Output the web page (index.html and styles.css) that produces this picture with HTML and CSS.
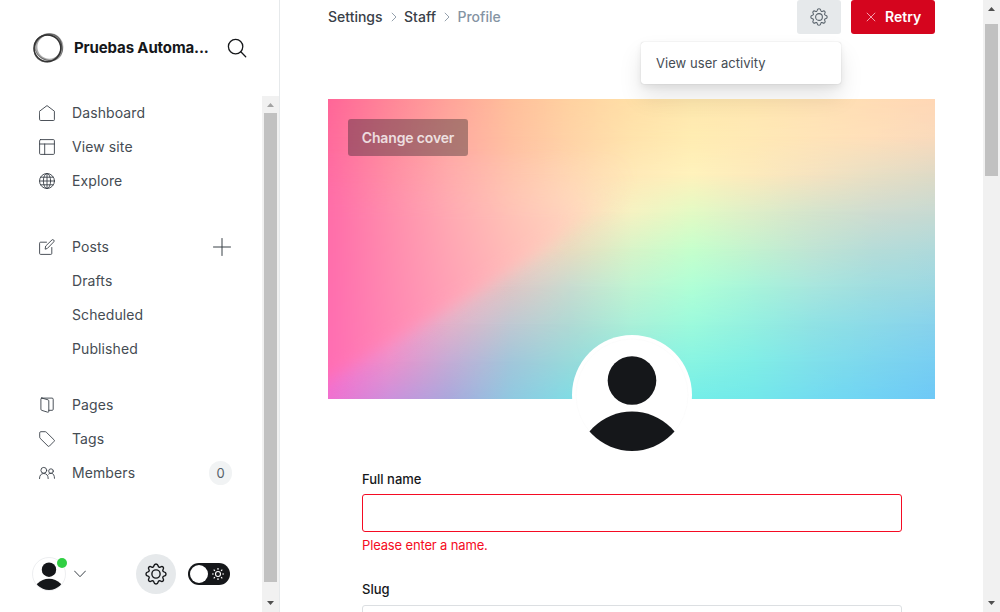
FILE: index.html
```
<!DOCTYPE html>
<html lang="en">
<head>
<meta charset="utf-8">
<title>Profile</title>
<link rel="stylesheet" href="styles.css">
</head>
<body>
<svg class="defs" width="0" height="0">
  <symbol id="gear" viewBox="0 0 24 24">
    <circle cx="12" cy="12" r="4.5"/>
    <path d="M9.6 3.3 C10.2 .3 13.8 .3 14.4 3.3 C14.7 4.6 15.6 5 16.8 4.4 C19.2 2.9 21.2 4.9 19.7 7.3 C19 8.4 19.5 9.3 20.7 9.6 C23.7 10.2 23.7 13.8 20.7 14.4 C19.5 14.7 19 15.6 19.7 16.7 C21.2 19.1 19.2 21.1 16.8 19.6 C15.6 19 14.7 19.4 14.4 20.7 C13.8 23.7 10.2 23.7 9.6 20.7 C9.3 19.4 8.4 19 7.2 19.6 C4.8 21.1 2.8 19.1 4.3 16.7 C5 15.6 4.5 14.7 3.3 14.4 C.3 13.8 .3 10.2 3.3 9.6 C4.5 9.3 5 8.4 4.3 7.3 C2.8 4.9 4.8 2.9 7.2 4.4 C8.4 5 9.3 4.6 9.6 3.3 Z"/>
  </symbol>
</svg>
<div class="app">
  <aside class="sidebar">
    <header class="brand">
      <svg class="brand-logo" viewBox="0 0 32 32"><g fill="none" stroke="#333"><circle cx="15.400" cy="16.300" r="13.400" stroke-width="1.500"/><ellipse cx="17.300" cy="15" rx="13" ry="12.800" stroke-width="2.200" opacity=".4"/><ellipse cx="16" cy="15.800" rx="14.700" ry="12.600" stroke-width="1.200" opacity=".6" transform="rotate(-48 16 16)"/><ellipse cx="16.400" cy="15.500" rx="14.300" ry="12.400" stroke-width="1" opacity=".55" transform="rotate(30 16 16)"/></g></svg>
      <span class="brand-name">Pruebas Automa...</span>
      <svg class="icon search" viewBox="0 0 20 20"><circle cx="8.600" cy="8.600" r="7.200"/><path d="M13.800 13.800 18.700 18.700"/></svg>
    </header>
    <div class="sidebar-body">
      <div class="sidebar-content">
        <nav class="nav">
          <a class="nav-item"><svg class="icon nav-icon" viewBox="0 0 16 16"><path d="M.6 6.2 8 .6l7.4 5.6v8.4q0 .9-.9.9h-13q-.9 0-.9-.9z"/></svg>Dashboard</a>
          <a class="nav-item"><svg class="icon nav-icon" viewBox="0 0 16 16"><rect x=".6" y=".6" width="14.8" height="14.8" rx="1"/><path d="M.6 5h14.8M5.700 5v10.400"/></svg>View site</a>
          <a class="nav-item"><svg class="icon nav-icon" viewBox="0 0 16 16"><circle cx="8" cy="8" r="7.5"/><ellipse cx="8" cy="8" rx="3.6" ry="7.5"/><path d="M.5 8h15M8 .5v15M1.8 4.2h12.4M1.8 11.8h12.4"/></svg>Explore</a>
          <a class="nav-item section"><svg class="icon nav-icon" viewBox="0 0 16 16"><path d="M7.5 3.2H1.6q-1 0-1 1v10.2q0 1 1 1h10.2q1 0 1-1V8.5M6.2 9.8l.5-2.800L13 .9q.8-.7 1.700.1.9.9.1 1.800L8.600 9.200z"/></svg>Posts<svg class="icon plus" viewBox="0 0 18 18"><path d="M9 .5v17M.5 9h17"/></svg></a>
          <a class="nav-item sub">Drafts</a>
          <a class="nav-item sub">Scheduled</a>
          <a class="nav-item sub">Published</a>
          <a class="nav-item section pages"><svg class="icon nav-icon" viewBox="0 0 16 16"><path d="M2.8 1.1 9 2.8q.8.3.8 1v10.5q0 1.200-1.100.9l-5.800-1.800q-1-.3-1-1.100V2q0-1 .9-1Zm0 0h10.200q1.200 0 1.200 1.100v10.100q0 1-1 1H9.800"/></svg>Pages</a>
          <a class="nav-item"><svg class="icon nav-icon" viewBox="0 0 16 16"><path d="M.7 1.700q0-1 1-1h4.500q.6 0 1 .4l7.900 7.800q.7.7 0 1.400l-4.700 4.800q-.7.7-1.400 0L1.100 7.300q-.4-.4-.4-1Z"/></svg>Tags</a>
          <a class="nav-item"><svg class="icon nav-icon" viewBox="0 0 16 16"><circle cx="4.800" cy="5.300" r="2.900"/><circle cx="12" cy="6.100" r="2.300"/><path d="M.5 13.600q0-5 4.300-5.100 4.400.1 4.400 5.100M9.600 9.100q1-1 2.800-.8 3 .3 3.100 5"/></svg>Members<span class="count">0</span></a>
        </nav>
        <footer class="userbar">
          <div class="user-avatar">
            <svg viewBox="0 0 34 34"><defs><clipPath id="smallClip"><circle cx="17" cy="17" r="16"/></clipPath></defs><circle cx="17" cy="17" r="16.5" fill="#fff" stroke="#e5e7ea" stroke-width=".7"/><g fill="#15171a" clip-path="url(#smallClip)"><circle cx="17" cy="12.700" r="7.200"/><circle cx="17" cy="38" r="16.300"/></g></svg>
            <span class="status"></span>
          </div>
          <svg class="icon chevron" viewBox="0 0 12 8"><path d="M.5 1 6 6.700 11.500 1"/></svg>
          <span class="settings-button"><svg class="icon gear-large"><use href="#gear"/></svg></span>
          <span class="night-toggle"><i></i><svg viewBox="0 0 12 12"><g fill="none" stroke="#fff"><circle cx="6" cy="6" r="2.500" stroke-width="1.100"/><path stroke-width="1.200" d="M6 0v1.700M6 10.300V12M0 6h1.700M10.300 6H12M1.700 1.700l1.200 1.200M9.100 9.100l1.200 1.200M10.300 1.700 9.100 2.900M2.900 9.100l-1.200 1.200"/></g></svg></span>
        </footer>
      </div>
      <div class="scrollbar side-scroll">
        <svg class="arrow light" viewBox="0 0 7 4"><path d="M0 4 3.500 0 7 4Z"/></svg>
        <span class="thumb"></span>
        <svg class="arrow" viewBox="0 0 7 4"><path d="M0 0h7L3.500 4Z"/></svg>
      </div>
    </div>
  </aside>
  <main class="main">
    <header class="topbar">
      <div class="breadcrumb">Settings<svg viewBox="0 0 6 10"><path d="M.8.8 5 5 .8 9.200"/></svg>Staff<svg viewBox="0 0 6 10"><path d="M.8.8 5 5 .8 9.200"/></svg><span>Profile</span></div>
      <div class="actions">
        <div class="action-gear"><svg class="icon gear-small"><use href="#gear"/></svg><div class="dropdown">View user activity</div></div>
        <div class="retry"><svg viewBox="0 0 10 10"><path d="M.8.8l8.400 8.400M9.200.8.800 9.200"/></svg>Retry</div>
      </div>
    </header>
    <section class="cover">
      <div class="art">
        <div class="wash w0"></div><div class="wash w1"></div><div class="wash w2"></div><div class="wash w3"></div><div class="wash w4"></div><div class="wash w5"></div><div class="wash w6"></div><div class="wash w7"></div><div class="wash w8"></div>
        <div class="beam"><div class="beam-shape"></div></div>
      </div>
      <span class="change-cover">Change cover</span>
      <div class="profile-photo"><svg viewBox="0 0 120 120"><defs><clipPath id="photoClip"><circle cx="60" cy="60" r="56"/></clipPath></defs><circle cx="60" cy="60" r="60" fill="#fff"/><circle cx="60" cy="60" r="56" fill="none" stroke="#fafafa" stroke-width=".6"/><g fill="#15171a" clip-path="url(#photoClip)"><circle cx="60" cy="45.500" r="24.300"/><circle cx="60" cy="131.500" r="55"/></g></svg></div>
    </section>
    <form class="profile-form">
      <label>Full name</label>
      <div class="field invalid"></div>
      <p class="error">Please enter a name.</p>
      <label class="slug-label">Slug</label>
      <div class="field"></div>
    </form>
  </main>
  <div class="scrollbar page-scroll">
    <svg class="arrow" viewBox="0 0 7 4"><path d="M0 4 3.500 0 7 4Z"/></svg>
    <span class="thumb"></span>
    <svg class="arrow" viewBox="0 0 7 4"><path d="M0 0h7L3.500 4Z"/></svg>
  </div>
</div>
</body>
</html>
```
FILE: styles.css
```
* { box-sizing: border-box; }
body { margin: 0; overflow: hidden; font-family: Inter, "Liberation Sans", sans-serif; color: #15171a; background: #fff; }
.defs { position: absolute; }
svg { display: block; flex: none; }
.app { display: flex; height: 612px; overflow: hidden; }
.icon { fill: none; stroke: #394047; stroke-width: 1; stroke-linejoin: round; stroke-linecap: round; }

.sidebar { width: 280px; flex: none; display: flex; flex-direction: column; border-right: 1px solid #e6e9eb; }
.brand { height: 96px; flex: none; display: flex; align-items: center; padding-left: 32px; }
.brand-logo { width: 32px; height: 32px; }
.brand-name { width: 154px; padding: 0 0 2px 10px; font-size: 15px; font-weight: 700; letter-spacing: -.13px; white-space: nowrap; }
.search { width: 20px; height: 20px; margin-left: 9px; stroke: #15171a; stroke-width: 1.3; }
.sidebar-body { flex: 1; display: flex; min-height: 0; }
.sidebar-content { flex: 1; display: flex; flex-direction: column; justify-content: space-between; }
.nav-item { display: flex; align-items: center; height: 34px; padding: 0 31px 2px 39px; font-size: 14px; letter-spacing: .1px; color: #454c53; }
.nav-icon { width: 16px; height: 16px; margin: 2px 17px 0 0; stroke-width: .9; }
.nav-item.section { margin-top: 32px; }
.nav-item.pages { margin-top: 22px; }
.nav-item.sub { padding-left: 72px; }
.plus { width: 18px; height: 18px; margin: 2px 0 0 auto; }
.count { width: 23px; height: 24px; border-radius: 12px; margin: 2px -1px 0 auto; background: #f1f3f4; text-align: center; font-size: 13px; line-height: 24px; color: #566069; letter-spacing: 0; }
.userbar { display: flex; align-items: center; padding: 0 0 18px 32px; }
.user-avatar { position: relative; width: 34px; height: 34px; }
.status { position: absolute; right: -1px; top: 1px; width: 10px; height: 10px; border-radius: 50%; background: #30cf43; }
.chevron { width: 12px; height: 8px; margin-left: 8px; }
.settings-button { width: 40px; height: 40px; margin-left: 50px; border-radius: 50%; background: #e6e9eb; display: grid; place-items: center; }
.gear-large { width: 22px; height: 22px; stroke: #15171a; stroke-width: 1.5; }
.night-toggle { width: 42px; height: 22px; margin-left: 12px; padding: 2px 6px 2px 2px; border-radius: 11px; background: #15171a; display: flex; align-items: center; justify-content: space-between; }
.night-toggle i { width: 18px; height: 18px; border-radius: 50%; background: #fff; }
.night-toggle svg { width: 12px; height: 12px; }

.scrollbar { width: 17px; flex: none; display: flex; flex-direction: column; align-items: center; background: #f1f1f1; }
.thumb { width: 13px; background: #c1c1c1; }
.arrow { width: 7px; height: 4px; fill: #505050; }
.arrow.light { fill: #a3a3a3; }
.side-scroll { padding-top: 7px; }
.side-scroll .thumb { height: 469px; margin: 6px 0 19px; }
.page-scroll { padding-top: 7px; }
.page-scroll .thumb { height: 152px; margin: 13px 0 425px; }

.main { flex: 1; padding: 0 48px; }
.topbar { height: 99px; display: flex; justify-content: space-between; }
.breadcrumb { height: 34px; padding-bottom: 2px; display: flex; align-items: center; font-size: 14px; font-weight: 500; color: #394047; }
.breadcrumb svg { width: 6px; height: 10px; margin: 2px 7.5px 0 8px; fill: none; stroke: #95a1ad; }
.breadcrumb span { color: #8594a3; }
.actions { display: flex; height: 34px; gap: 10px; }
.action-gear { position: relative; width: 44px; border-radius: 3px; background: #e6e9eb; display: grid; place-items: center; }
.gear-small { width: 18px; height: 18px; stroke: #566069; stroke-width: 1.4; }
.dropdown { position: absolute; z-index: 3; right: 0; top: 42px; width: 200px; height: 42px; padding-left: 15px; background: #fff; border-radius: 3px; font-size: 13px; line-height: 42px; color: #454c53; letter-spacing: .05px; box-shadow: 0 0 1px rgba(0,0,0,.25), 0 3px 7px rgba(0,0,0,.07), 0 13px 23px rgba(0,0,0,.1); }
.retry { width: 84px; border-radius: 3px; background: #d5051e; color: #fff; display: flex; align-items: center; padding: 0 0 2px 15px; font-size: 14px; font-weight: 600; }
.retry svg { width: 10px; height: 10px; margin: 2px 9px 0 0; stroke: #f59cac; fill: none; }

/* Each wash is a horizontal blend that fades in over the one before it, forming a colour mesh. */
.cover { position: relative; height: 300px; }
.art { height: 300px; display: grid; overflow: hidden; }
.wash, .beam { grid-area: 1 / 1; }
.w0 { background: linear-gradient(90deg,#ff6698,#ff8698,#ffa49a,#ffbf9b,#ffd2a1,#ffdfa7,#fee7ae,#ffe6b0,#ffe2b4,#ffdcb5,#ffd7b6); }
.w1 { background: linear-gradient(90deg,#ff6a9c,#ff8a9c,#ffa8a0,#ffc0a0,#ffd3a6,#ffe3ac,#ffecb2,#ffe9b5,#ffe4b8,#ffdfba,#fadabc); mask-image: linear-gradient(transparent 0,#000 12.5%); }
.w2 { background: linear-gradient(90deg,#ff6ca2,#ff8da2,#ffabaa,#ffc2aa,#ffd6b0,#ffe9b8,#fff2bc,#fdeabc,#f6e3c0,#e9dfc4,#dfdac6); mask-image: linear-gradient(transparent 12.5%,#000 25%); }
.w3 { background: linear-gradient(90deg,#ff6eaa,#ff90ac,#ffadb2,#ffc6b4,#ffdabc,#f6f2c2,#e4fac4,#dfeec8,#d5e4cc,#cfdcd0,#c8dad2); mask-image: linear-gradient(transparent 25%,#000 37.5%); }
.w4 { background: linear-gradient(90deg,#ff70b4,#ff92b8,#ffb0bc,#ffcac2,#e9dcc0,#d8f4c8,#c6ffcc,#c4f2cf,#c0e4d4,#b6dcd8,#b0dadb); mask-image: linear-gradient(transparent 37.5%,#000 50%); }
.w5 { background: linear-gradient(90deg,#ff72be,#ff96c0,#ffb4c2,#dfc6c6,#c8dcd0,#c0f4d2,#b0ffd6,#a8f4da,#a8e6de,#a0dde0,#9cd8e2); mask-image: linear-gradient(transparent 50%,#000 62.5%); }
.w6 { background: linear-gradient(90deg,#ff72c6,#ff94c8,#e2b2ca,#c0c8d2,#b0dad4,#aaf0d8,#9cfadc,#94f0e0,#90e2e4,#8cdae8,#88d2ec); mask-image: linear-gradient(transparent 62.5%,#000 75%); }
.w7 { background: linear-gradient(90deg,#fc72cc,#ec90cc,#c4acd6,#a2c6da,#98dada,#8eeae0,#88f4e2,#80eee6,#80e0ea,#7cd6ee,#78cef2); mask-image: linear-gradient(transparent 75%,#000 87.5%); }
.w8 { background: linear-gradient(90deg,#f070d0,#cc90dc,#aaa8dc,#90c8e0,#80dce4,#78e6e6,#74eee8,#72e8ea,#72dcf0,#70d2f4,#6ec8f6); mask-image: linear-gradient(transparent 87.5%,#000); }
.beam { margin: -40px 0 0 -40px; width: 400px; height: 340px; mask-image: linear-gradient(90deg,#000 270px,transparent 350px), linear-gradient(transparent 90px,#000 160px); mask-composite: intersect; filter: blur(8px); }
.beam-shape { width: 400px; height: 340px; clip-path: polygon(0 0,400px 0,400px 122px,340px 136px,293px 162px,253px 191px,207px 221px,150px 255px,107px 281px,40px 320px,0 335px); background: linear-gradient(transparent 120px,rgba(255,112,210,.35) 340px), linear-gradient(90deg,#ff6ca6 40px,#ff8eaa 101px,#ffacb0 161px,#ffc6b4 222px,#ffdabc 283px,#ffecbc 343px); }
.change-cover { position: absolute; left: 20px; top: 20px; width: 120px; height: 37px; border-radius: 3px; background: rgba(21,23,26,.35); color: rgba(255,255,255,.8); text-align: center; font-size: 14px; font-weight: 600; letter-spacing: -.15px; line-height: 38px; }
.profile-photo { position: absolute; left: 244px; top: 236px; width: 120px; height: 120px; }

.profile-form { padding: 72px 33px 0 34px; font-size: 13px; }
.profile-form label { display: block; height: 23px; line-height: 17px; font-weight: 500; }
.profile-form .slug-label { height: 24px; }
.field { height: 38px; border: 1px solid #dcdfe2; border-radius: 3px; }
.field.invalid { border-color: #f50b23; }
.error { margin: 0; height: 49px; padding-top: 5px; line-height: 17px; color: #f50b23; letter-spacing: -.15px; }
```
